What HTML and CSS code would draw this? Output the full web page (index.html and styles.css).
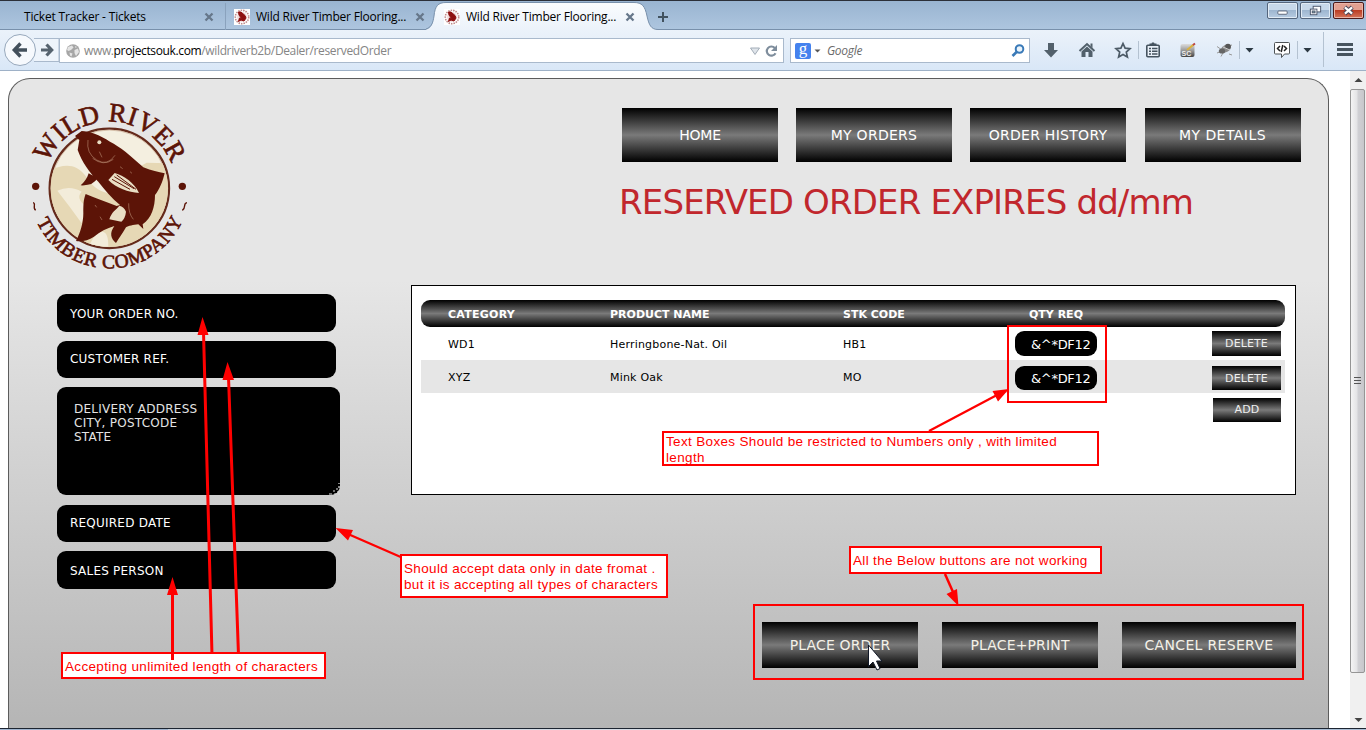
FILE: index.html
```
<!DOCTYPE html>
<html lang="en">
<head>
<meta charset="utf-8">
<title>Wild River Timber Flooring</title>
<link rel="stylesheet" href="styles.css">
</head>
<body>
<svg width="0" height="0" class="defs">
  <symbol id="favicon" viewBox="0 0 16 16"><rect width="16" height="16" fill="#fff"/><circle cx="8" cy="8" r="6.700" fill="none" stroke="#c08a8a" stroke-width="1.600" stroke-dasharray="1.500 1"/><circle cx="8" cy="8" r="5" fill="#f1dede"/><path d="M4.500 3L7 3 11 6.500 12 9 10 12 7 11 4.500 12.500 5.500 9 7.500 9.500 5 6Z" fill="#8e0f0f" stroke="#8e0f0f"/></symbol>
  <symbol id="close" viewBox="0 0 10 10"><path d="M1.500 1.500L8.500 8.500M8.500 1.500L1.500 8.500" stroke="#66778a" stroke-width="2.300" fill="none"/></symbol>
</svg>
<header class="titlebar">
  <svg class="active-shape" width="240" height="30" viewBox="426 0 240 30"><defs><linearGradient id="tabg" x2="0" y2="1"><stop offset="0" stop-color="#fafcfe"/><stop offset="1" stop-color="#ebf2fa"/></linearGradient></defs><path d="M426 29.500C432 29 433 22 434 16C435 6 438 2.500 446 2.500H634C642 2.500 645 6 647 16C649 25 651 29.500 658 29.500V31H426Z" fill="url(#tabg)"/><path d="M422 29.500C432 29.500 433 22 434 16C435 6 438 2.500 446 2.500H634C642 2.500 645 6 647 16C649 25 651 29.500 658 29.500H668" fill="none" stroke="#7890ab"/></svg>
  <div class="tab first"><span class="tab-title t1">Ticket Tracker - Tickets</span><svg class="x"><use href="#close"/></svg></div>
  <div class="tab"><svg class="fav"><use href="#favicon"/></svg><span class="tab-title t2">Wild River Timber Flooring...</span><svg class="x"><use href="#close"/></svg></div>
  <div class="tab"><svg class="fav"><use href="#favicon"/></svg><span class="tab-title t2">Wild River Timber Flooring...</span><svg class="x"><use href="#close"/></svg></div>
  <svg class="plus" width="12" height="12" viewBox="0 0 12 12"><path d="M6 1V11M1 6H11" stroke="#42525f" stroke-width="2"/></svg>
  <div class="winbtns">
    <span class="wb"><svg viewBox="0 0 30 16"><rect x="10" y="8.500" width="10" height="3.500" rx="1" fill="#fff" stroke="#5a6478"/></svg></span>
    <span class="wb"><svg viewBox="0 0 30 16"><rect x="12.500" y="3.500" width="8" height="6" fill="#fff" stroke="#4c566c"/><rect x="9.500" y="6.500" width="7" height="6" fill="#fff" stroke="#4c566c"/><rect x="11.500" y="8.500" width="3" height="2" fill="#8aa" stroke="#4c566c"/></svg></span>
    <span class="wb red"><svg viewBox="0 0 30 16"><path d="M11 4.500L19 11.500M19 4.500L11 11.500" stroke="#4a4658" stroke-width="4.600"/><path d="M11.200 4.700L18.800 11.300M18.800 4.700L11.200 11.300" stroke="#fff" stroke-width="2.400"/></svg></span>
  </div>
</header>
<nav class="toolbar">
  <svg class="backfwd" width="59" height="40" viewBox="0 30 59 40"><path d="M34 38.500H59V61.500H34" fill="#eef4fb" stroke="#a9b9cc"/><circle cx="20" cy="50" r="15.500" fill="#f6f9fd" stroke="#97a8bc"/><path d="M14.500 50H27M20.500 43.500L14.300 50L20.500 56.500" fill="none" stroke="#43505c" stroke-width="3.400"/><path d="M41 50H52M46.500 44.500L51.700 50L46.500 55.500" fill="none" stroke="#56636f" stroke-width="3.200"/></svg>
  <div class="url">
    <svg width="14" height="14" viewBox="0 0 14 14"><circle cx="7" cy="7" r="6.800" fill="#a6a6a6"/><path d="M2 3L6 1.500 7.500 3.500 5 6 2.500 7 1 6ZM8.500 6L12 4.500 13 8 10 12 8.500 9ZM3.500 8.500L6.500 9.500 5.500 12.500 4 11.500ZM9 2L11 3 9.500 4Z" fill="#e4e4e4"/></svg>
    <span class="addr">www.<b>projectsouk.com</b>/wildriverb2b/Dealer/reservedOrder</span>
    <svg width="34" height="22" viewBox="748 39 34 22"><path d="M750.500 47H759.500L755 53.500Z" fill="#dfe4ea" stroke="#a3adb8"/><path d="M774.800 47A4.600 4.600 0 1 0 775.500 52.200" fill="none" stroke="#7e8d9c" stroke-width="2.200"/><path d="M777 44V50H771Z" fill="#7e8d9c"/></svg>
  </div>
  <div class="search">
    <span class="g">g</span>
    <svg width="7" height="4" viewBox="0 0 7 4"><path d="M.5 .5H6.500L3.500 3.500Z" fill="#555"/></svg>
    <i>Google</i>
    <svg width="16" height="16" viewBox="0 0 16 16"><circle cx="9.500" cy="6" r="3.800" fill="#eaf4fc" stroke="#3a7ab8" stroke-width="2"/><path d="M6.800 8.800L2.500 13" stroke="#3a7ab8" stroke-width="2.600"/></svg>
  </div>
  <svg width="39" height="40" viewBox="1030 30 39 40"><path d="M1048 43H1054V50H1058L1051 57.500L1044 50H1048Z" fill="#52606b"/></svg>
  <svg width="36" height="40" viewBox="1069 30 36 40"><path d="M1079.500 51L1087 44L1094.500 51" fill="none" stroke="#52606b" stroke-width="2"/><path d="M1090.500 43.500H1092.500V48L1090.500 46ZM1081.500 51.500L1087 46.500L1092.500 51.500V57H1088.500V52H1085.500V57H1081.500Z" fill="#52606b"/></svg>
  <svg width="35" height="40" viewBox="1105 30 35 40"><path d="M1123 43.500L1125.100 48.200L1130 48.700L1126.300 52.100L1127.400 57L1123 54.500L1118.600 57L1119.700 52.100L1116 48.700L1120.900 48.200Z" fill="none" stroke="#4d5b67" stroke-width="1.700"/><path d="M1138.500 41V59" stroke="#b4c2d1"/></svg>
  <svg width="30" height="40" viewBox="1140 30 30 40"><rect x="1146.800" y="45.200" width="12.400" height="11.600" rx="1" fill="#e9f0f8" stroke="#45535f" stroke-width="1.600"/><path d="M1149.500 45.500V43.500H1151.500L1152 42.500H1154L1154.500 43.500H1156.500V45.500Z" fill="#45535f"/><path d="M1149 48.500H1151M1152 48.500H1157.500M1149 51.200H1151M1152 51.200H1157.500M1149 54H1151M1152 54H1157.500" stroke="#45535f" stroke-width="1.400"/></svg>
  <svg width="36" height="40" viewBox="1170 30 36 40"><defs><linearGradient id="sc" x2="0" y2="1"><stop stop-color="#ddd"/><stop offset=".5" stop-color="#999"/><stop offset="1" stop-color="#444"/></linearGradient></defs><rect x="1180.500" y="44" width="14" height="13" rx="2" fill="url(#sc)"/><text x="1181.500" y="56" class="sc">SC</text><path d="M1187 50L1193.500 44.800" stroke="#d9b13e" stroke-width="2"/><path d="M1193 45L1195 43.500" stroke="#b44" stroke-width="2"/></svg>
  <svg width="34" height="40" viewBox="1206 30 34 40"><path d="M1217 46.500L1222 50M1217 53L1222 51M1221 56.500L1224 51M1229 54L1232 55M1228 46L1232 45" stroke="#999"/><ellipse cx="1226" cy="48.500" rx="5.500" ry="3.600" transform="rotate(-30 1226 48.500)" fill="#8b8b8b"/><ellipse cx="1222" cy="51" rx="3.200" ry="2.600" fill="#666"/><circle cx="1228" cy="46.500" r="2.800" fill="#555"/><path d="M1223 47L1230 50" stroke="#ccc"/><path d="M1239.500 41V59" stroke="#b4c2d1"/></svg>
  <svg width="24" height="40" viewBox="1240 30 24 40"><path d="M1245.500 48H1253.500L1249.500 52.500Z" fill="#2c3943"/></svg>
  <svg width="34" height="40" viewBox="1264 30 34 40"><path d="M1275.500 42.500H1288.500Q1289.500 42.500 1289.500 43.500V53Q1289.500 54 1288.500 54H1284.500L1281.500 57.500V54H1275.500Q1274.500 54 1274.500 53V43.500Q1274.500 42.500 1275.500 42.500Z" fill="#fff" stroke="#4d5255"/><path d="M1280 46L1277.500 48.500L1280 51M1284 46L1286.500 48.500L1284 51M1282.800 45L1281.200 52" fill="none" stroke="#222" stroke-width="1.500"/><path d="M1297.500 41V59" stroke="#b4c2d1"/></svg>
  <svg width="26" height="40" viewBox="1298 30 26 40"><path d="M1303.500 48H1311.500L1307.500 52.500Z" fill="#2c3943"/><path d="M1323.500 32V67" stroke="#b4c2d1"/></svg>
  <svg width="42" height="40" viewBox="1324 30 42 40"><path d="M1337 44.500H1353M1337 49.500H1353M1337 54.500H1353" stroke="#47545f" stroke-width="2.800"/></svg>
</nav>
<div class="viewport">
  <main class="page">
    <div class="top">
      <svg class="logo" width="180" height="185" viewBox="0 0 540 555">
        <defs><path id="arcTop" d="M68 295A200 200 0 0 1 468 295"/><path id="arcBot" d="M28 295A240 240 0 0 0 508 295"/><clipPath id="cc"><circle cx="268" cy="295" r="176"/></clipPath></defs>
        <circle cx="268" cy="295" r="179" fill="#f4efe0" stroke="#652a1b" stroke-width="7"/>
        <circle cx="268" cy="295" r="175" fill="none" stroke="#c5a68c" stroke-width="2"/>
        <g clip-path="url(#cc)"><path d="M90 240C130 225 165 215 200 262C240 330 330 330 350 235L380 218L450 220V480H90Z" fill="#e6d8b5"/><path d="M112 302Q150 285 185 305Q165 325 200 350L185 400Q150 350 112 302ZM225 435Q265 405 265 470H205Z" fill="#f3ecda"/></g>
        <path d="M165 138L185 123C205 123 240 135 270 155C300 170 330 195 370 232C395 242 415 247 434 250C428 275 418 300 405 315C405 350 395 385 368 403L370 417L355 403C340 405 325 407 318 412C308 430 297 445 288 459C272 445 268 430 283 408C260 415 240 425 222 440C205 452 185 455 168 453C180 430 190 400 190 370C190 345 190 330 197 312C225 325 260 335 290 348L300 345C275 325 255 300 235 275C210 250 185 215 173 180L178 150ZM182 286Q200 270 206 250L232 265Q220 288 182 286Z" fill="#5c1407"/>
        <path d="M265 270L284 249C312 258 342 276 357 309C325 306 290 295 265 270ZM268 388C275 365 288 360 298 347Q312 350 318 365Q316 385 304 395Z" fill="#e9dec4"/>
        <path d="M276 268L330 298M283 260L342 296M290 255L348 298" stroke="#5c1407" stroke-width="3"/>
        <path d="M204 150Q198 190 230 210T285 196M218 205Q250 230 280 208M326 340Q325 370 340 388M238 185L246 202M300 230L308 236M330 245L336 250M225 345L230 352M240 380L246 390" fill="none" stroke="#b08068" stroke-width="2"/>
        <circle cx="238" cy="157" r="6" fill="#e9dec4"/>
        <circle cx="47" cy="289" r="11" fill="#5c1407"/><circle cx="487" cy="289" r="11" fill="#5c1407"/>
        <path d="M39 338C50 340 36 352 47 361M501 338C488 340 500 352 487 361" stroke="#5c1407" stroke-width="4" fill="none"/>
        <text class="arc a1"><textPath href="#arcTop" startOffset="78" textLength="474">WILD RIVER</textPath></text>
        <text class="arc a2"><textPath href="#arcBot" startOffset="103" textLength="552">TIMBER COMPANY</textPath></text>
      </svg>
      <div class="head">
        <div class="menu"><a class="btn home">HOME</a><a class="btn">MY ORDERS</a><a class="btn">ORDER HISTORY</a><a class="btn last">MY DETAILS</a></div>
        <h1>RESERVED ORDER EXPIRES dd/mm</h1>
      </div>
    </div>
    <div class="body">
      <form class="fields">
        <div class="field">YOUR ORDER NO.</div>
        <div class="field s">CUSTOMER REF.</div>
        <div class="area">DELIVERY ADDRESS<br>CITY, POSTCODE<br>STATE<svg class="grip" width="12" height="12" viewBox="0 0 12 12"><path d="M1 11H4M6 11H8M10 11H12M5 8H7M8 6H10M11 3V5M9 9H11M11 0V1" stroke="#ddd" stroke-width="1.200"/></svg></div>
        <div class="field s">REQUIRED DATE</div>
        <div class="field">SALES PERSON</div>
      </form>
      <div class="right">
        <section class="card">
          <div class="row th"><span class="c">CATEGORY</span><span>PRODUCT NAME</span><span>STK CODE</span><span class="q">QTY REQ</span></div>
          <div class="row"><span>WD1</span><span>Herringbone-Nat. Oil</span><span>HB1</span><span class="qty">&amp;^*DF12</span><a class="sm">DELETE</a></div>
          <div class="row alt"><span>XYZ</span><span>Mink Oak</span><span>MO</span><span class="qty">&amp;^*DF12</span><a class="sm">DELETE</a></div>
          <div class="row"><a class="sm add">ADD</a></div>
        </section>
        <div class="actions"><a class="btn">PLACE ORDER</a><a class="btn">PLACE+PRINT</a><a class="btn wide">CANCEL RESERVE</a></div>
      </div>
    </div>
  </main>
  <aside class="scroll"><svg width="16" height="657" viewBox="1350 71 16 657"><defs><linearGradient id="th"><stop stop-color="#f6f6f6"/><stop offset=".45" stop-color="#e4e4e6"/><stop offset=".55" stop-color="#d0d0d4"/><stop offset="1" stop-color="#c6c6ca"/></linearGradient></defs><path d="M1354.500 82L1358.500 78L1362.500 82ZM1354.500 718L1358.500 722L1362.500 718Z" fill="#444"/><rect x="1350.500" y="89.500" width="14" height="583" rx="1.500" fill="url(#th)" stroke="#959595"/><path d="M1354 377.500H1361M1354 380.500H1361M1354 383.500H1361" stroke="#555"/></svg></aside>
</div>
<footer class="bottom"></footer>
<svg class="overlay" width="1366" height="730" viewBox="0 0 1366 730">
  <g stroke="#f00" fill="none"><path d="M172.500 660V592M212 655L203.500 332M238.500 655L228.500 377" stroke-width="3"/><path d="M403 558L348 534M929 431L997 395" stroke-width="2.300"/><path d="M945 574L953 592" stroke-width="2.500"/><rect x="1008" y="326" width="98" height="76" stroke-width="2"/><rect x="754" y="605" width="549" height="74" stroke-width="2"/></g>
  <path d="M172.500 577L178 595H167ZM202.500 317L208.500 335H197.500ZM227.500 362L234 380H222.500ZM335.500 528L353 530L348 540.500ZM1009 389L998 401.500L992.500 391ZM958.500 606L946.500 594L957 589Z" fill="#f00"/>
  <path d="M868.500 645V666.500L873 662L877 670L880 668.500L876.500 661H882Z" fill="#fff" stroke="#111827"/>
</svg>
<div class="note n1">Accepting unlimited length of characters</div>
<div class="note n2">Should accept data only in date fromat .<br>but it is accepting all types of characters</div>
<div class="note n3">Text Boxes Should be restricted to Numbers only , with limited<br>length</div>
<div class="note n4">All the Below buttons are not working</div>
<svg class="overlay" width="1366" height="730" viewBox="0 0 1366 730"><path d="M172.500 660V650" stroke="#f00" stroke-width="3"/></svg>
</body>
</html>
```

FILE: styles.css
```
* { box-sizing: border-box; }
body { margin: 0; width: 1366px; height: 730px; overflow: hidden; position: relative; display: flex; flex-direction: column; background: #fff; font-family: "DejaVu Sans", sans-serif; }
svg { display: block; flex: none; }
.defs { position: absolute; }
.titlebar { position: relative; height: 30px; flex: none; display: flex; align-items: center; padding-top: 2px; border-top: 1px solid #2b2f38; background: linear-gradient(#99b4d1, #aec6df); box-shadow: inset 0 -1px #7890ab; font: 12px "Open Sans", sans-serif; color: #000; }
.active-shape { position: absolute; left: 426px; top: -1px; }
.tab { position: relative; width: 210px; height: 100%; display: flex; align-items: center; padding: 0 11px 0 8px; }
.tab.first { width: 226px; padding-left: 24px; border-right: 1px solid #8aa2bd; }
.tab-title { flex: 1; white-space: nowrap; position: relative; }
.t1 { letter-spacing: -.18px; }
.t2 { letter-spacing: -.22px; }
.x { width: 10px; height: 10px; }
.fav { width: 16px; height: 16px; margin-right: 6px; }
.plus { margin-left: 11px; }
.winbtns { margin-left: auto; display: flex; gap: 2px; align-self: flex-start; margin-right: 2px; margin-top: -1px; }
.wb { width: 31px; height: 17px; border: 1px solid #54657c; border-radius: 2px; background: linear-gradient(#c7d8ea 45%, #9eb6d0 50%, #b8cce2); box-shadow: inset 0 0 0 1px #e1ebf5; }
.wb svg { width: 29px; height: 15px; }
.wb.red { border-color: #4c1a1a; background: linear-gradient(#e2a091 45%, #bc3d24 50%, #d4755b); box-shadow: inset 0 0 0 1px #eab5a8; }
.toolbar { height: 41px; flex: none; display: flex; border-bottom: 1px solid #9eb1c7; background: linear-gradient(#ebf2fa, #d9e7f7); }
.url { width: 725px; height: 25px; margin-top: 8px; display: flex; align-items: center; border: 1px solid #a9b9cc; background: #fff; padding: 0 1px 0 6px; font: 12px "Open Sans", sans-serif; color: #858585; }
.addr { flex: 1; margin-left: 4px; letter-spacing: -.36px; }
.addr b { font-weight: 400; color: #000; }
.search { width: 240px; height: 25px; margin: 8px 0 0 6px; display: flex; align-items: center; border: 1px solid #a9b9cc; background: #fff; padding: 0 3px 0 4px; font: 12px "Open Sans", sans-serif; color: #6a6a6a; }
.g { width: 16px; height: 16px; border-radius: 2px; background: #4582ee; color: #fff; font: 17px/11px "Liberation Serif", serif; text-align: center; margin-right: 3px; }
.search i { flex: 1; margin-left: 6px; letter-spacing: -.3px; }
.sc { font: bold 7px "Liberation Sans", sans-serif; fill: #eee; }
.viewport { flex: 1; display: flex; justify-content: space-between; min-height: 0; }
.page { width: 1321px; margin: 7px 0 0 8px; border: 1px solid #5c5c5c; border-bottom: 0; border-radius: 22px 22px 0 0; background: linear-gradient(#e6e6e6 31%, #b5b5b5); }
.top { display: flex; height: 206px; }
.logo { margin: 11px 0 0 11px; }
.arc { font-family: "Liberation Serif", serif; fill: #5c1407; stroke: #5c1407; stroke-width: 2; }
.a1 { font-size: 80px; }
.a2 { font-size: 58px; }
.head { margin-left: 422px; padding-top: 29px; }
.menu { display: flex; gap: 18px; }
.btn { width: 156px; height: 54px; display: flex; align-items: center; justify-content: center; color: #fff; font-size: 14px; letter-spacing: .28px; background: linear-gradient(#000, #7a7a7a 50%, #000); }
.btn.home { letter-spacing: -.2px; }
.btn.last { margin-left: 1px; padding-right: 1px; letter-spacing: .45px; }
h1 { margin: 19px 0 0 -3px; font-weight: 400; font-size: 34px; line-height: 42px; letter-spacing: -.85px; color: #c1272d; white-space: nowrap; }
.body { display: flex; }
.fields { width: 283px; margin: 9px 71px 0 48px; display: flex; flex-direction: column; gap: 9px; }
.field { width: 279px; height: 38px; border-radius: 9px; background: #000; color: #fff; font-size: 12px; letter-spacing: .22px; line-height: 40px; padding-left: 13px; }
.field.s { height: 37px; line-height: 37px; }
.area { position: relative; height: 108px; margin-bottom: 1px; border-radius: 9px; background: #000; color: #e4e4e4; font-size: 12px; letter-spacing: .25px; line-height: 14px; padding: 15px 0 0 17px; }
.grip { position: absolute; right: 0; bottom: 0; }
.right { width: 885px; }
.card { height: 210px; border: 1px solid #000; background: #fff; padding: 14px 10px 0 9px; }
.row { height: 33px; display: grid; grid-template-columns: 162px 233px 172px 197px 69px; padding-left: 27px; align-items: center; font-size: 11px; letter-spacing: .2px; color: #000; }
.row > span:not(.qty) { padding-top: 2px; }
.row.th { height: 27px; border-radius: 9px; color: #fff; font-weight: 700; letter-spacing: 0; background: linear-gradient(#000, #7a7a7a 50%, #000); }
.c { letter-spacing: .25px; }
.q { padding-left: 14px; }
.alt { background: #e6e6e6; }
.qty { width: 82px; height: 25px; border-radius: 9px; background: #000; color: #fff; font-size: 13px; letter-spacing: -.3px; line-height: 27px; padding-left: 16px; }
.sm { width: 69px; height: 25px; line-height: 26px; text-align: center; letter-spacing: .1px; color: #eee; background: linear-gradient(#000, #7a7a7a 50%, #000); }
.alt .qty, .alt .sm { height: 24px; margin-top: 2px; line-height: 25px; }
.add { grid-column: 5; width: 68px; height: 24px; line-height: 24px; margin-left: 1px; }
.actions { display: flex; gap: 24px; margin: 127px 0 0 351px; }
.actions .btn { height: 46px; color: #f4f1e8; letter-spacing: .15px; }
.actions .wide { width: 174px; letter-spacing: .33px; }
.scroll { width: 16px; background: #f0f0f0; }
.bottom { height: 2px; flex: none; border-top: 1px solid #1c2430; background: linear-gradient(90deg, #9fb4ce 168px, #c9d3df 168px, #e2e7ee 1100px, #a9bdd4 1100px); }
.overlay { position: absolute; left: 0; top: 0; }
.note { position: absolute; border: 2px solid #f00; background: #fff; color: #f00; font: 13.500px/16px "Liberation Sans", Arial, sans-serif; letter-spacing: .34px; white-space: nowrap; padding-left: 2px; }
.n1 { left: 61px; top: 652px; width: 265px; height: 27px; padding-top: 5px; }
.n2 { left: 400px; top: 554px; width: 268px; height: 44px; padding-top: 5px; }
.n3 { left: 662px; top: 431px; width: 437px; height: 35px; padding-top: 1px; line-height: 15.500px; }
.n4 { left: 849px; top: 546px; width: 253px; height: 28px; padding-top: 5px; }
```
